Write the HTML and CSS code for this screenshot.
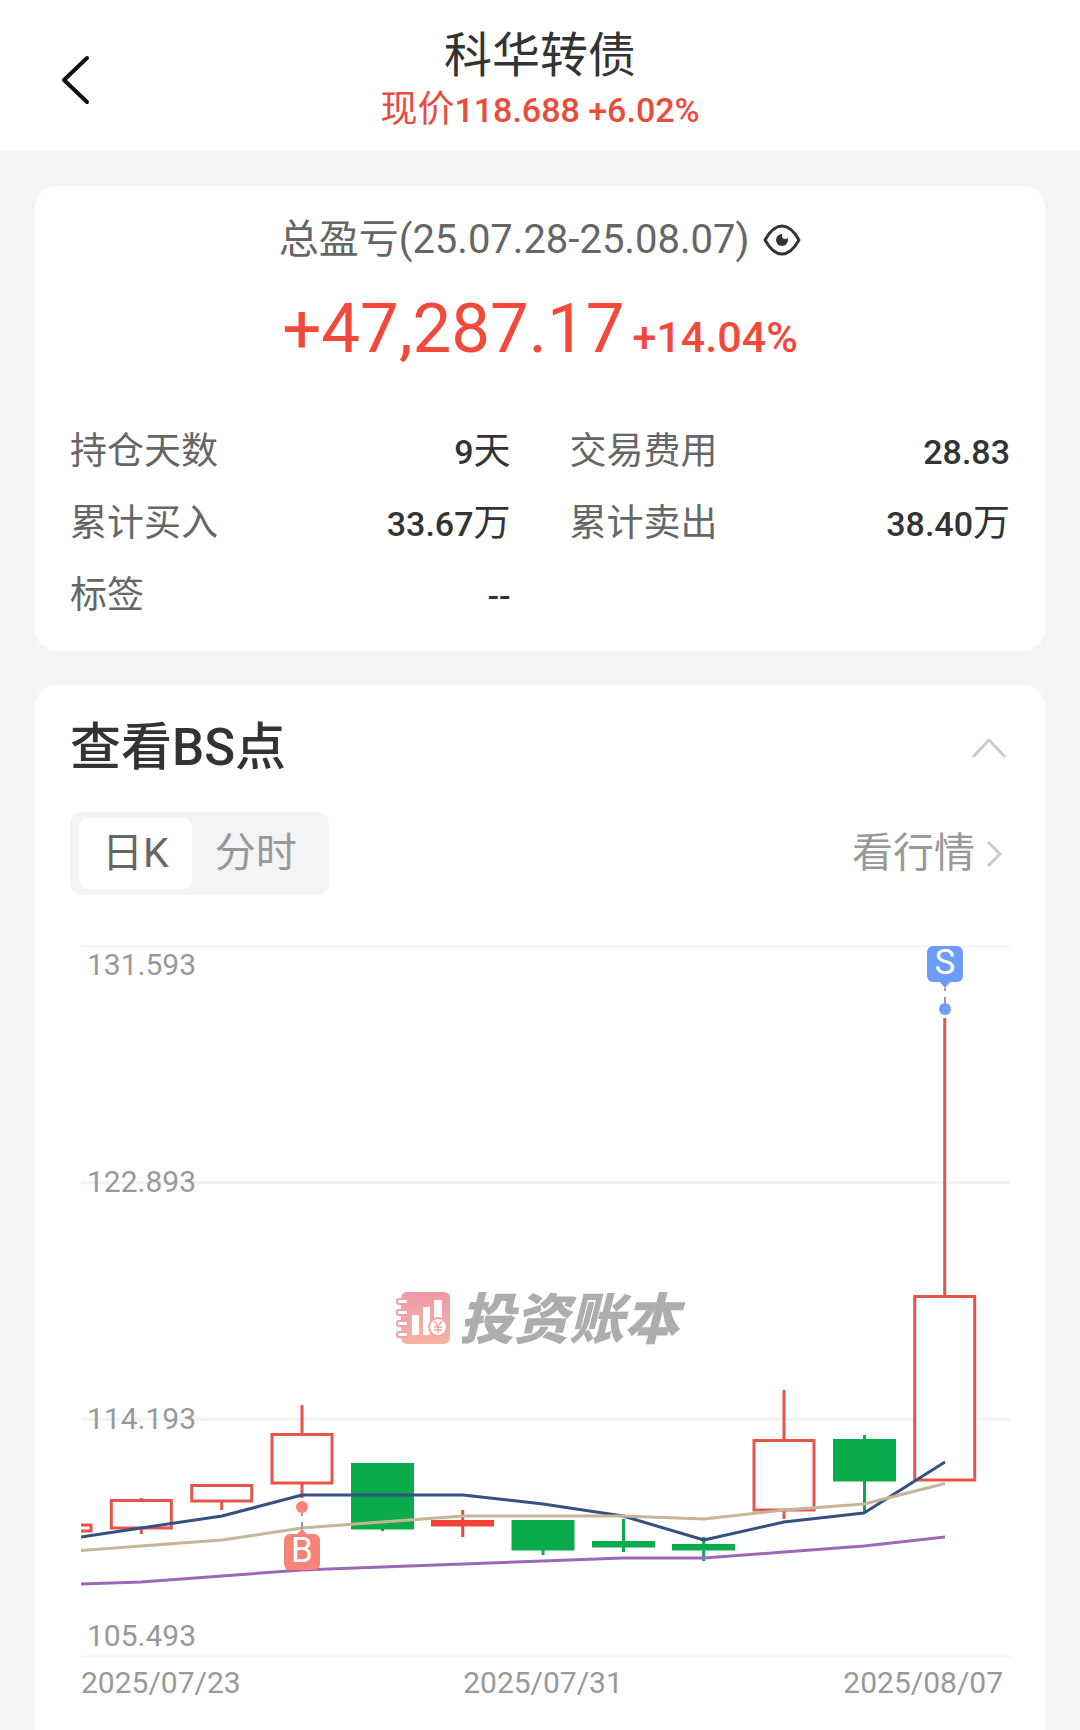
FILE: index.html
```html
<!DOCTYPE html>
<html lang="zh-CN">
<head>
    <meta charset="UTF-8">
    <meta name="viewport" content="width=device-width, initial-scale=1.0">
    <title>科华转债</title>
    <link rel="stylesheet" href="styles.css">
</head>
<body>
    <header class="header">
        <button class="icon-button back" type="button" aria-label="返回">
            <svg width="32" height="52" viewBox="0 0 32 52"><path d="M28 4 L5 26 L28 48" fill="none" stroke="#111" stroke-width="4" stroke-linecap="round" stroke-linejoin="round"/></svg>
        </button>
        <div class="heading">
            <h1>科华转债</h1>
            <p class="price">现价<span class="num">118.688 +6.02%</span></p>
        </div>
    </header>

    <main>
        <section class="card summary">
            <div class="period">
                <span>总盈亏(25.07.28-25.08.07)</span>
                <button class="icon-button" type="button" aria-label="隐藏金额">
                    <svg width="38" height="32" viewBox="0 0 38 32">
                        <path d="M2 16 C7 7 13 2 19 2 C25 2 31 7 36 16 C31 25 25 30 19 30 C13 30 7 25 2 16 Z" fill="none" stroke="#333" stroke-width="3" stroke-linejoin="round"/>
                        <circle cx="19" cy="16" r="6" fill="#333"/>
                        <circle cx="22" cy="12" r="3" fill="#fff"/>
                    </svg>
                </button>
            </div>
            <div class="profit">
                <span class="amount">+47,287.17</span>
                <span class="percent">+14.04%</span>
            </div>
            <dl class="stats">
                <div class="stat"><dt>持仓天数</dt><dd><span class="num">9</span>天</dd></div>
                <div class="stat"><dt>交易费用</dt><dd><span class="num">28.83</span></dd></div>
                <div class="stat"><dt>累计买入</dt><dd><span class="num">33.67</span>万</dd></div>
                <div class="stat"><dt>累计卖出</dt><dd><span class="num">38.40</span>万</dd></div>
                <div class="stat"><dt>标签</dt><dd><span class="num">--</span></dd></div>
            </dl>
        </section>

        <section class="card points">
            <div class="points-head">
                <h2>查看BS点</h2>
                <button class="icon-button" type="button" aria-label="收起">
                    <svg width="40" height="24" viewBox="0 0 40 24"><path d="M3 21 L19 4 L35 21" fill="none" stroke="#ccc" stroke-width="3" stroke-linejoin="round"/></svg>
                </button>
            </div>
            <div class="toolbar">
                <div class="tabs">
                    <button class="tab active" type="button">日K</button>
                    <button class="tab" type="button">分时</button>
                </div>
                <a class="quote-link" href="#">看行情
                    <svg width="18" height="28" viewBox="0 0 18 28"><path d="M3 2 L15 14 L3 26" fill="none" stroke="#ccc" stroke-width="3"/></svg>
                </a>
            </div>

            <svg class="chart" viewBox="0 0 929 770" role="img" aria-label="日K线图">
                <defs>
                    <linearGradient id="logoFill" x1="0" y1="0" x2="0" y2="1">
                        <stop offset="0" stop-color="#ee9aa9"/>
                        <stop offset="1" stop-color="#f6b3a1"/>
                    </linearGradient>
                </defs>

                <!-- grid -->
                <g stroke="#f3f3f4">
                    <path d="M0 6.5H929M0 716.5H929" stroke-width="2"/>
                    <path d="M0 242.5H929M0 479.5H929" stroke-width="3"/>
                </g>

                <!-- watermark -->
                <g>
                    <rect x="320" y="352" width="49" height="52" rx="6" fill="url(#logoFill)"/>
                    <g fill="#fff" stroke="#efa0a8" stroke-width="2">
                        <rect x="316" y="359" width="11" height="5" rx="2"/>
                        <rect x="316" y="370" width="11" height="5" rx="2"/>
                        <rect x="316" y="381" width="11" height="5" rx="2"/>
                        <rect x="316" y="392" width="11" height="5" rx="2"/>
                    </g>
                    <path d="M331 375h7v20h-7zM342 367h7v28h-7zM353 360h8v22h-8z" fill="#fff"/>
                    <circle cx="357" cy="387" r="10" fill="#f3a5a6"/>
                    <circle cx="357" cy="387" r="8" fill="#fff"/>
                    <path d="M353 381l4 5 4-5M357 386v7M353 387h8M353 390h8" fill="none" stroke="#f3a9a3" stroke-width="1.5"/>
                    <text class="watermark" x="378" y="399">投资账本</text>
                </g>

                <!-- candles up -->
                <g fill="#fff" stroke="#e5554a" stroke-width="3">
                    <path d="M60.3 558V594M140.7 562V570M221 465V558M703 450V579M863.7 78V356"/>
                    <path d="M-2 585H10V591H-2"/>
                    <rect x="30.3" y="560.5" width="60" height="27.5"/>
                    <rect x="110.7" y="545.5" width="60" height="15.5"/>
                    <rect x="191" y="494.5" width="60" height="48.5"/>
                    <rect x="673" y="500.5" width="60" height="69.5"/>
                    <rect x="833.7" y="356.5" width="60" height="183.5"/>
                </g>
                <g fill="#f44336">
                    <rect x="350" y="580" width="63" height="6.5"/>
                    <rect x="380.2" y="570" width="3" height="27"/>
                </g>

                <!-- candles down -->
                <g fill="#09ab4c">
                    <rect x="270" y="523" width="63" height="66.5"/>
                    <rect x="300" y="589" width="3" height="2"/>
                    <rect x="430.5" y="580" width="63" height="30.5"/>
                    <rect x="460.5" y="610" width="3" height="5"/>
                    <rect x="511" y="601" width="63" height="6.5"/>
                    <rect x="541" y="579" width="3" height="33"/>
                    <rect x="591" y="604" width="63" height="6.5"/>
                    <rect x="621.2" y="597" width="3" height="24"/>
                    <rect x="752" y="499" width="63" height="42.5"/>
                    <rect x="782" y="495" width="3" height="77"/>
                </g>

                <!-- moving averages -->
                <g fill="none" stroke-width="3" stroke-linejoin="round">
                    <polyline stroke="#33527f" points="0,597 60,588 141,576 221,555 301,555 382,555 462,564 542,576 623,600 703,582 783,573 864,522"/>
                    <polyline stroke="#c4b697" points="0,610.5 60,606 141,600 221,588 301,582 382,576 462,576 542,576 623,579 703,570 783,564 864,543.5"/>
                    <polyline stroke="#9c6ab3" points="0,644 60,642 141,636 221,630 301,627 382,624 462,621 542,618 623,618 703,612 783,606 864,597"/>
                </g>

                <!-- buy / sell markers -->
                <path d="M221 573v3M221 582v7M864 48v3M864 57v6" stroke="#999" stroke-width="2"/>
                <g fill="#fb8278">
                    <circle cx="221" cy="567" r="6"/>
                    <rect x="203" y="594" width="36" height="36" rx="6"/>
                    <path d="M215 595l6-6 6 6z"/>
                </g>
                <g fill="#6d9dfb">
                    <circle cx="864" cy="69" r="6"/>
                    <rect x="846" y="6" width="36" height="36" rx="6"/>
                    <path d="M858 41l6 7 6-7z"/>
                </g>
                <text class="marker" x="221" y="622">B</text>
                <text class="marker" x="864" y="34">S</text>

                <!-- axis labels -->
                <g class="axis">
                    <text x="6" y="35">131.593</text>
                    <text x="6" y="252">122.893</text>
                    <text x="6" y="489">114.193</text>
                    <text x="6" y="706">105.493</text>
                    <text x="0" y="753">2025/07/23</text>
                    <text x="462" y="753" text-anchor="middle">2025/07/31</text>
                    <text x="922" y="753" text-anchor="end">2025/08/07</text>
                </g>
            </svg>
        </section>
    </main>
</body>
</html>
```

FILE: styles.css
```css
* {
    box-sizing: border-box;
}

body {
    font-family: Roboto, "Noto Sans CJK SC", sans-serif;
    margin: 0;
    background-color: #f3f4f6;
    color: #333;
}

h1, h2, p, dl, dd {
    margin: 0;
}

button {
    font: inherit;
    color: inherit;
    border: none;
    background: none;
    padding: 0;
    cursor: pointer;
}

svg {
    display: block;
}

.icon-button {
    flex: none;
}

/* Header */
.header {
    display: grid;
    grid-template-columns: 120px 1fr 120px;
    align-items: center;
    padding: 26px 0 17px;
    background-color: #fff;
}

.back {
    padding: 0 29px 0 59px;
}

.heading {
    text-align: center;
}

h1 {
    font-size: 48px;
    font-weight: 400;
    line-height: 60px;
}

.price {
    font-size: 37px;
    line-height: 48px;
    color: #e84c3d;
}

.num {
    font-size: 34px;
    font-weight: 500;
    line-height: 1;
}

/* Cards */
main {
    display: flex;
    flex-direction: column;
    gap: 34px;
    padding: 35px 35px 0;
}

.card {
    background-color: #fff;
    border-radius: 22px;
    padding: 24px 35px 19px;
}

.period {
    display: flex;
    justify-content: center;
    align-items: center;
    gap: 14px;
    font-size: 40px;
    line-height: 60px;
    color: #666;
}

.profit {
    display: flex;
    justify-content: center;
    align-items: baseline;
    gap: 8px;
    margin: 14px 0 42px;
    line-height: 90px;
    color: #f4483a;
}

.amount {
    font-size: 69px;
}

.percent {
    font-size: 43px;
    font-weight: 500;
    line-height: 1;
}

.stats {
    display: grid;
    grid-template-columns: 1fr 1fr;
    column-gap: 59px;
    font-size: 37px;
    line-height: 72px;
}

.stat {
    display: flex;
    justify-content: space-between;
}

.stat dt {
    color: #666;
}

/* BS points */
.points {
    padding-top: 26px;
    padding-bottom: 24px;
    border-radius: 22px 22px 0 0;
}

.points-head,
.toolbar {
    display: flex;
    justify-content: space-between;
    align-items: center;
}

.points-head {
    margin-bottom: 27px;
}

h2 {
    font-size: 51px;
    font-weight: 500;
    line-height: 74px;
}

.toolbar {
    margin-bottom: 45px;
    font-size: 41px;
    line-height: 71px;
    color: #999;
}

.tabs {
    display: flex;
    padding: 6px 9px;
    border-radius: 12px;
    background-color: #f3f4f6;
}

.tab {
    padding: 0 23px;
    border-radius: 9px;
}

.tab.active {
    background-color: #fff;
    color: #666;
}

.quote-link {
    display: flex;
    align-items: center;
    gap: 10px;
    padding-right: 7px;
    color: #999;
    text-decoration: none;
}

/* Chart */
.chart {
    width: calc(100% - 11px);
    margin-left: 11px;
}

.axis {
    font-size: 30px;
    fill: #999;
}

.marker {
    font-size: 35px;
    fill: #fff;
    text-anchor: middle;
}

.watermark {
    font-size: 55px;
    font-weight: 900;
    font-style: italic;
    fill: #adadad;
}
```
